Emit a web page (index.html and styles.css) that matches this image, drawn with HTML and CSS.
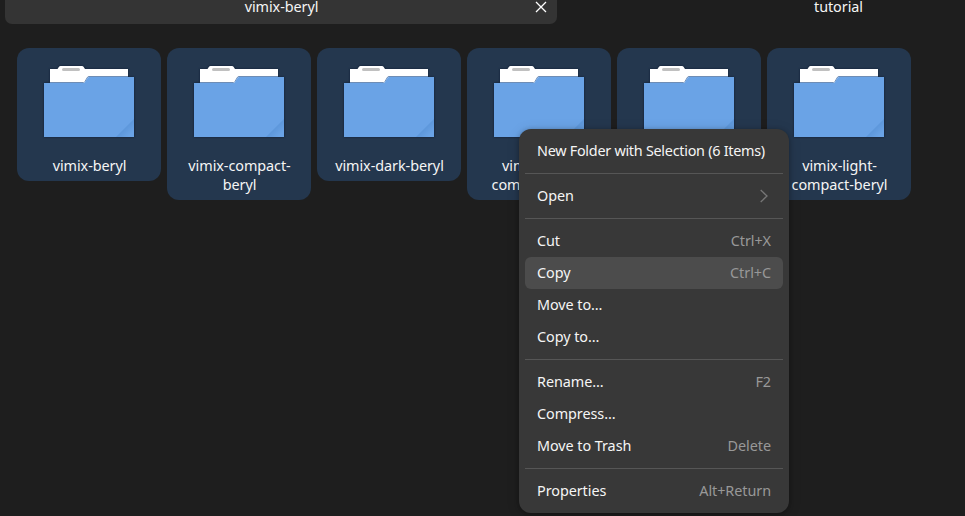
FILE: index.html
```html
<!DOCTYPE html>
<html lang="en">
<head>
<meta charset="utf-8">
<title>Files</title>
<link rel="stylesheet" href="styles.css">
</head>
<body>
<svg class="defs" aria-hidden="true">
  <defs>
    <linearGradient id="fold" gradientUnits="userSpaceOnUse" x1="84" y1="74" x2="90" y2="80">
      <stop offset="0" stop-color="#5d97db"/><stop offset="1" stop-color="#6aa3e6"/>
    </linearGradient>
    <symbol id="folder" viewBox="0 0 96 96">
      <path class="paper" d="M9 31V15H16.500L18 12.800Q18.500 12 19.500 12H41Q42 12 42.500 12.800L44 15H87V31Z"/>
      <rect class="pill" x="21" y="14" width="18" height="3" rx="1.500"/>
      <path class="edge" d="M9 28.500H42.500Q43.500 28.500 44 27.500L46 24Q46.600 22.500 48 22.500H87"/>
      <path class="front" d="M3 29H42.500Q43.500 29 44 28L46.200 24.500Q47 23 48 23H93V83H3Z"/>
      <path fill="url(#fold)" d="M75 83L93 65V83Z"/>
    </symbol>
  </defs>
</svg>
<header class="tabs">
  <div class="tab active"><span>vimix-beryl</span>
    <svg class="close" viewBox="0 0 12 12"><path d="M1 1L11 11M11 1L1 11"/></svg>
  </div>
  <div class="tab"><span>tutorial</span></div>
</header>
<main class="grid">
  <div class="tile"><svg class="icon"><use href="#folder"/></svg><span>vimix-beryl</span></div>
  <div class="tile"><svg class="icon"><use href="#folder"/></svg><span>vimix-compact-<br>beryl</span></div>
  <div class="tile"><svg class="icon"><use href="#folder"/></svg><span>vimix-dark-beryl</span></div>
  <div class="tile"><svg class="icon"><use href="#folder"/></svg><span>vimix-dark-<br>compact-beryl</span></div>
  <div class="tile tall"><svg class="icon"><use href="#folder"/></svg></div>
  <div class="tile"><svg class="icon"><use href="#folder"/></svg><span>vimix-light-<br>compact-beryl</span></div>
</main>
<nav class="menu">
  <div class="item"><span class="long">New Folder with Selection (6 Items)</span></div>
  <hr>
  <div class="item"><span>Open</span><svg class="chevron" viewBox="0 0 8 14"><path d="M.7 1L7 7L.7 13"/></svg></div>
  <hr>
  <div class="item"><span>Cut</span><kbd>Ctrl+X</kbd></div>
  <div class="item hover"><span>Copy</span><kbd>Ctrl+C</kbd></div>
  <div class="item"><span>Move to…</span></div>
  <div class="item"><span>Copy to…</span></div>
  <hr>
  <div class="item"><span>Rename…</span><kbd>F2</kbd></div>
  <div class="item"><span>Compress…</span></div>
  <div class="item"><span>Move to Trash</span><kbd>Delete</kbd></div>
  <hr>
  <div class="item"><span>Properties</span><kbd>Alt+Return</kbd></div>
</nav>
</body>
</html>
```
FILE: styles.css
```css
* { box-sizing: border-box; }
body {
  margin: 0;
  height: 516px;
  overflow: hidden;
  background: #1e1e1e;
  color: #f5f5f5;
  font: 14.4px/19px "Noto Sans", sans-serif;
  letter-spacing: -.06px;
}
.defs { position: absolute; width: 0; height: 0; }
.tabs { display: grid; grid-template-columns: 552px 403px; gap: 5px; height: 24px; padding-left: 5px; }
.tab {
  display: grid;
  grid-template-columns: 552px;
  justify-items: center;
  align-items: start;
  border-radius: 0 0 7px 7px;
  overflow: hidden;
}
.tab > * { grid-area: 1 / 1; }
.tab span { margin: -3px 0 0 1px; }
.tab.active { background: #343434; }
.close { width: 12px; height: 12px; justify-self: end; margin: 1px 10px 0 0; }
.close path, .chevron path { fill: none; stroke: #fff; stroke-width: 1.3; }
.grid {
  display: grid;
  grid-template-columns: repeat(6, 144px);
  gap: 6px;
  align-items: start;
  padding: 24px 0 0 17px;
}
.tile {
  display: flex;
  flex-direction: column;
  align-items: center;
  gap: 6px;
  padding: 6px 0;
  border-radius: 12px;
  background: #24374e;
  text-align: center;
}
.tile.tall { height: 152px; }
.tile span { padding-left: 1px; }
.icon { width: 96px; height: 96px; filter: drop-shadow(0 .5px 1px rgba(0, 10, 35, .65)); }
.paper { fill: #fff; }
.pill { fill: #c0c0c0; }
.edge { fill: none; stroke: #6e8db5; stroke-width: 1; }
.front { fill: #6aa3e6; }
.menu {
  position: absolute;
  left: 519px;
  top: 129px;
  width: 270px;
  padding: 6px;
  border-radius: 12px;
  background: #383838;
  box-shadow: 0 1px 5px rgba(0, 0, 0, .3), 0 2px 14px rgba(0, 0, 0, .12);
}
.item {
  display: flex;
  justify-content: space-between;
  align-items: center;
  height: 32px;
  padding: 0 12px;
  border-radius: 6px;
  white-space: nowrap;
}
.item span, kbd { padding-bottom: 2px; }
.long { letter-spacing: -.27px; }
.item.hover { background: #4c4c4c; }
kbd { font: inherit; color: #989898; }
hr { height: 1px; margin: 6px 0; border: 0; background: #565656; }
.chevron { width: 8px; height: 14px; margin-right: 3px; }
.chevron path { stroke: #777; }
```
